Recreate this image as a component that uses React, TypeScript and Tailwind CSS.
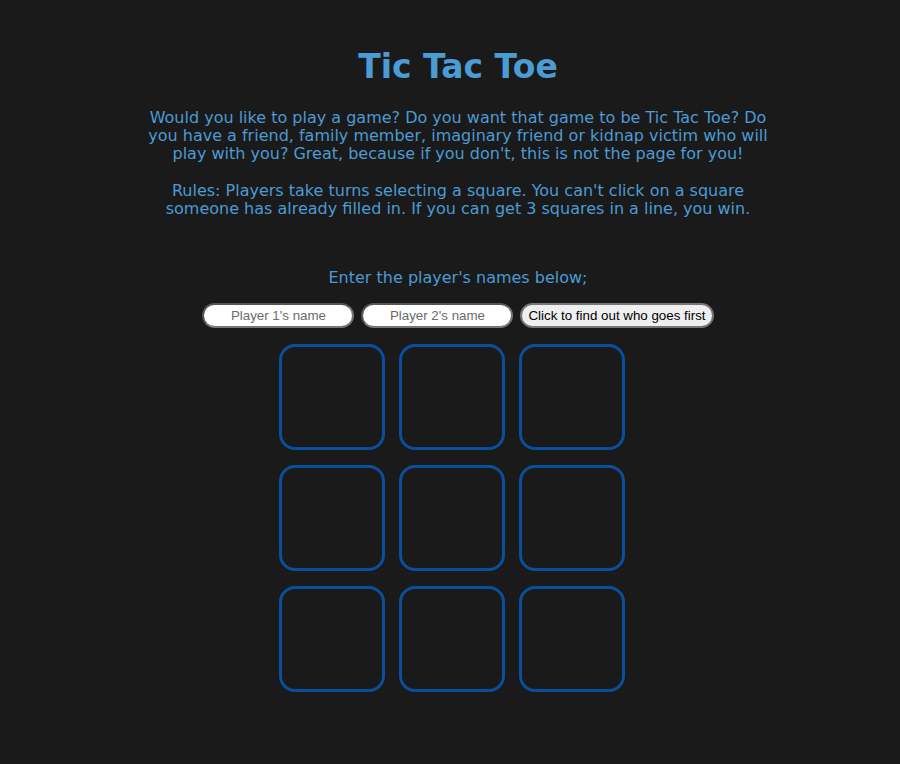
import React from "react";

export default function App() {
    const squares = [0, 1, 2, 3, 4, 5, 6, 7, 8];

    return (
        <div className="min-h-[764px] bg-[#1a1a1a] text-[#4b9bd4] font-['DejaVu_Sans',Verdana,sans-serif] text-center">
            <div className="pt-[44px] pl-[16px]">
                <h1 className="text-[33px] font-bold leading-[46px]">Tic Tac Toe</h1>
                <p className="mt-[19px] mx-auto max-w-[630px] text-[16px] leading-[18px]">
                    Would you like to play a game? Do you want that game to be Tic Tac Toe? Do you have a friend, family member, imaginary friend or kidnap victim who will play with you? Great, because if you don't, this is not the page for you!
                </p>
                <p className="mt-[19px] mx-auto max-w-[630px] text-[16px] leading-[18px]">
                    Rules: Players take turns selecting a square. You can't click on a square someone has already filled in. If you can get 3 squares in a line, you win.
                </p>
                <p className="mt-[51px] text-[16px] leading-[18px]">Enter the player's names below;</p>
                <div className="mt-[16px] flex justify-center gap-[7px] font-['Liberation_Sans',Arial,sans-serif] text-[13.33px]">
                    <input
                        placeholder="Player 1's name"
                        className="w-[152px] h-[25px] rounded-full bg-white border-2 border-[#767676] border-t-[#555] border-l-[#555] text-center text-black placeholder:text-[#6b6b6b] outline-none"
                    />
                    <input
                        placeholder="Player 2's name"
                        className="w-[152px] h-[25px] rounded-full bg-white border-2 border-[#767676] border-t-[#555] border-l-[#555] text-center text-black placeholder:text-[#6b6b6b] outline-none"
                    />
                    <button className="h-[25px] px-[6px] rounded-full bg-[#efefef] border-2 border-[#767676] text-black">
                        Click to find out who goes first
                    </button>
                </div>
            </div>
            <div className="mt-[16px] mx-auto pl-[4px] w-[350px] grid grid-cols-3 gap-x-[14px] gap-y-[15px]">
                {squares.map((i) => (
                    <div
                        key={i}
                        className="w-[106px] h-[106px] rounded-[16px] border-[3px] border-[#0a4e9e]"
                    />
                ))}
            </div>
        </div>
    );
}
